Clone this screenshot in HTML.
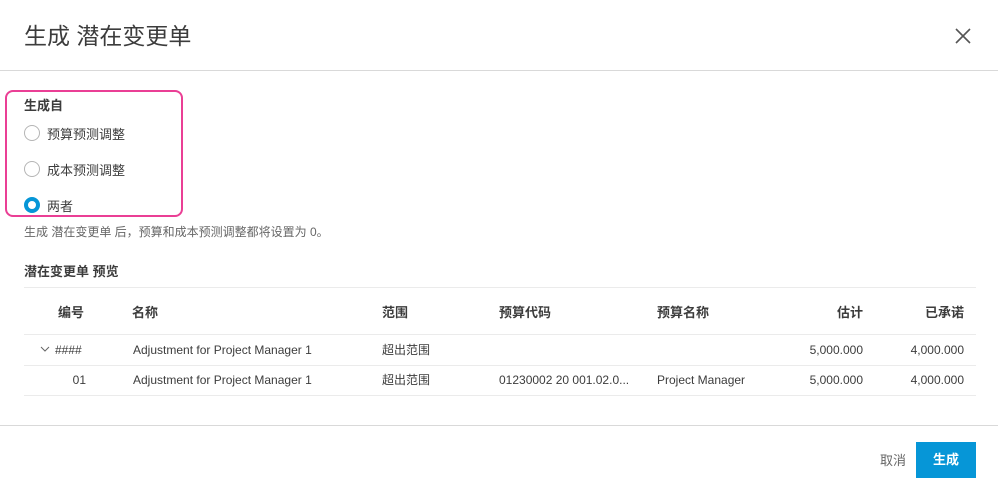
<!DOCTYPE html>
<html><head><meta charset="utf-8"><style>
*{margin:0;padding:0;box-sizing:border-box}
body{width:998px;height:504px;background:#fff;font-family:"Liberation Sans","Noto Sans CJK SC",sans-serif;color:#3c3c3c;position:relative;overflow:hidden}
.a{position:absolute;white-space:nowrap}
.line{position:absolute;left:0;width:998px;height:1px;background:#d9d9d9}
.tl{position:absolute;left:24px;width:952px;height:1px;background:#ebebeb}
.r{position:absolute;left:24px;width:16px;height:16px;border-radius:50%;border:1px solid #b5b5b5}
.h{font-size:13px;font-weight:bold;color:#3c3c3c}
.c{font-size:12px;color:#3c3c3c}
</style></head><body>
<div class="a" style="left:24px;top:17px;font-size:23px;color:#3c3c3c">生成 潜在变更单</div>
<svg class="a" style="left:955px;top:28px" width="16" height="16"><path d="M1 1L15 15M15 1L1 15" stroke="#555" stroke-width="1.6"/></svg>
<div class="line" style="top:70px"></div>
<div class="a" style="left:5px;top:90px;width:178px;height:127px;border:2px solid #ea3f95;border-radius:8px"></div>
<div class="a h" style="left:24px;top:95px">生成自</div>
<div class="r" style="top:125px"></div><div class="a" style="left:47px;top:124px;font-size:13px">预算预测调整</div>
<div class="r" style="top:161px"></div><div class="a" style="left:47px;top:160px;font-size:13px">成本预测调整</div>
<div class="r" style="top:197px;border:4px solid #0696d7"></div><div class="a" style="left:47px;top:196px;font-size:13px">两者</div>
<div class="a" style="left:24px;top:223px;font-size:12px;color:#666">生成 潜在变更单 后，预算和成本预测调整都将设置为 0。</div>
<div class="a h" style="left:24px;top:261px">潜在变更单 预览</div>
<div class="tl" style="top:287px"></div>
<div class="a h" style="left:24px;top:302px;width:60px;text-align:right">编号</div>
<div class="a h" style="left:132px;top:302px">名称</div>
<div class="a h" style="left:382px;top:302px">范围</div>
<div class="a h" style="left:499px;top:302px">预算代码</div>
<div class="a h" style="left:657px;top:302px">预算名称</div>
<div class="a h" style="left:760px;top:302px;width:103px;text-align:right">估计</div>
<div class="a h" style="left:860px;top:302px;width:104px;text-align:right">已承诺</div>
<div class="tl" style="top:334px"></div>
<svg class="a" style="left:40px;top:346px" width="10" height="7"><path d="M1 1L5 5L9 1" stroke="#666" fill="none"/></svg>
<div class="a c" style="left:55px;top:343px">####</div>
<div class="a c" style="left:133px;top:343px">Adjustment for Project Manager 1</div>
<div class="a c" style="left:382px;top:341px">超出范围</div>
<div class="a c" style="left:760px;top:343px;width:103px;text-align:right">5,000.000</div>
<div class="a c" style="left:860px;top:343px;width:104px;text-align:right">4,000.000</div>
<div class="tl" style="top:365px"></div>
<div class="a c" style="left:24px;top:373px;width:62px;text-align:right">01</div>
<div class="a c" style="left:133px;top:373px">Adjustment for Project Manager 1</div>
<div class="a c" style="left:382px;top:371px">超出范围</div>
<div class="a c" style="left:499px;top:373px">01230002 20 001.02.0...</div>
<div class="a c" style="left:657px;top:373px">Project Manager</div>
<div class="a c" style="left:760px;top:373px;width:103px;text-align:right">5,000.000</div>
<div class="a c" style="left:860px;top:373px;width:104px;text-align:right">4,000.000</div>
<div class="tl" style="top:395px"></div>
<div class="line" style="top:425px"></div>
<div class="a" style="left:880px;top:450px;font-size:13px;color:#666">取消</div>
<div class="a" style="left:916px;top:442px;width:60px;height:36px;background:#0696d7;color:#fff;font-size:13px;font-weight:bold;text-align:center;line-height:36px">生成</div>
</body></html>
